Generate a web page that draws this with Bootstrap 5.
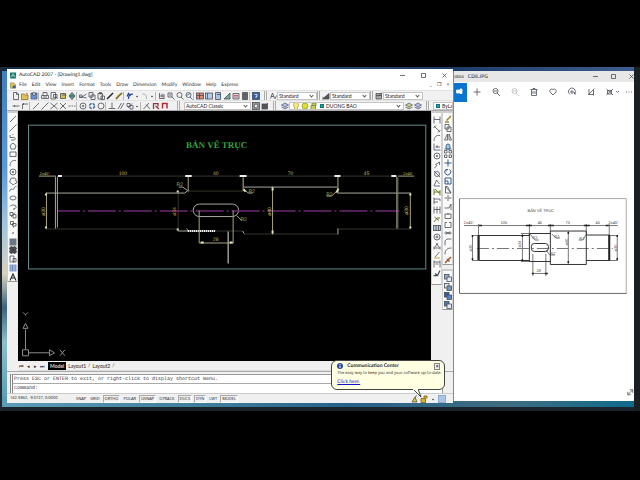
<!DOCTYPE html>
<html lang="en">
<head>
<meta charset="utf-8">
<meta name="viewport" content="width=device-width, initial-scale=1">
<title>AutoCAD 2007 - [Drawing1.dwg]</title>
<link href="https://cdn.jsdelivr.net/npm/bootstrap@5.3.0/dist/css/bootstrap.min.css" rel="stylesheet">
<style>
body{background:#000;font:5px/8px Lato,"Liberation Sans",sans-serif;text-rendering:geometricPrecision;color:#222;height:100vh;padding:67px 0 69px;overflow:hidden}
button,select{font:inherit;color:inherit;border:0;background:none;padding:0}
.desk{background:linear-gradient(90deg,#16293d,#2b5a84 30%,#1c3a66 70%,#3d5f8f) top/100% 4px no-repeat,linear-gradient(90deg,#5b9cb8,#41809c 30%,#26618a 55%,#3f6d80 80%,#0f6a8c) bottom 4px left 0/100% 6px no-repeat,linear-gradient(#3f7cc0,#5b9ad8 30%,#9cc4e0 45%,#d8d2c0 60%,#3b6480 70%,#8cc0c8 80%,#4d96b4);border-left:2px solid #222830;border-right:6px solid #1a2022}
.desk,.winrow,.acad,.photos,.photo{min-width:0;min-height:0}
.titlebar,.menus,.strip,.tabs,.cmd,.status,.phead,.ptools,.taskbar{flex-shrink:0}
.winrow{padding:2px 0 0 5px}
.taskbar{height:4px;background:#1b242c}
.acad{flex:447 1 0;background:#f0f0f0;margin-bottom:4px}
.photos{flex:180 1 0;background:#fff;margin:2px 0 6px;border-left:1px solid #888}
.titlebar{height:11px;background:#fff;padding:1px 0 0 3px;gap:3px}
.menus{height:10px;background:#fff;padding:0 4px 0 3px;color:#333}
.menus svg{margin-right:-2px}
.menus a{color:inherit;text-decoration:none}
.mgap{gap:5px}
.strip{height:10px;background:#f1f1f1;padding-left:4px;border-top:1px solid #e2e2e2}
.strip.tall{height:11px;border-bottom:1px solid #aaa}
.tb{width:9px;height:9px;flex:none;display:flex;align-items:center;justify-content:center}
.strip .tb.dot{width:6px}
.tb svg{width:8px;height:8px}
svg.ic{fill:none;stroke:#4a4f55;stroke-width:1.6;overflow:visible}
.sep{width:1px;height:8px;background:#b5b5b5;margin-right:1px;flex:none}
.brk{width:3px;height:9px;border-left:1px solid #aaa;border-right:1px solid #aaa;flex:none}
.strip .brk{margin:0 1px 0 0}
.strip.tall .brk{margin:0 4px}
.combo{position:relative;height:8px;background:#fff;border:1px solid #c4c4c4;display:flex;align-items:center;padding-left:1px;overflow:hidden;flex:none}
.combo select{appearance:none;flex:1;min-width:0;height:6px;line-height:6px;outline:0}
.combo::after{content:"";width:3px;height:3px;border:solid #555;border-width:0 1px 1px 0;transform:rotate(45deg);position:absolute;right:3px;top:1px}
.combo.bare{flex:1;padding-left:0}
.combo.bare::after{display:none}
.wide1{width:40px}.wide2{width:67px}.wide3{width:115px}
.swatch{width:4px;height:4px;background:#15a8a0;border:1px solid #177;margin:0 2px;flex:none}
.side{width:11px;flex:none}
.sidebox{background:#fafafa;border:1px solid #d0d0d0;border-top:2px solid #ccc;border-bottom-color:#999;display:flex;flex-direction:column;align-items:center;padding-top:2px}
.sidebox .tb{height:9px;flex:0 1 9px}
.drawbar{height:171px}.dimbar{height:174px}.modbar{height:154px}.ordbar{height:41px}
.model{background:#000;min-height:0}
.model svg,.photo svg{display:block;width:100%;height:100%}
.tabs{height:10px;border-bottom:1px solid #ddd;gap:2px}
.tabs .on{background:#000;color:#ddd;padding:0 2px;font-weight:700}
.navb{width:7px;height:8px}
.cmd{height:22px;border-top:1px solid #aaa;padding:2px 10px 0 3px}
.cmdbox{background:#fff;border:1px solid #999;border-left:3px double #888;font-family:"Liberation Mono",monospace;color:#333}
.cmdbox div,.cmdbox label{height:9px;line-height:9px;padding-left:1px}
.cmdbox div{border-bottom:1px solid #aaa}
.cmdbox input{border:0;outline:0;font:inherit;padding:0;height:7px}
.status{height:10px;border-top:1px solid #ccc;padding:0 7px 0 3px;gap:2px;font:4px/8px "Open Sans","Noto Sans",sans-serif}
.coord{width:63px}
.status button:not(.tb){padding:0 1px;height:8px}
.status button.on{border:1px solid #aaa;border-right-color:#fff;border-bottom-color:#fff;line-height:6px}
.tip{position:absolute;right:8px;bottom:13px;width:114px;height:30px;background:#ffffe1;border:1px solid #444;border-radius:6px;padding:1px 4px 0 5px}
.tip .tail{position:absolute;left:78px;top:28px;width:12px;height:9px;overflow:visible}
.tip .tiptext{font:4px/8px "Open Sans","Noto Sans",sans-serif}
.tip a{color:#11c}
.shut{width:6px;height:7px;border:1px solid #888;background:#eee;line-height:5px;font-weight:700}
.phead{height:11px;background:#e7e7e7}
.ptools{height:20px}
.ptools button{width:19px;height:19px;flex:none}
.ptools .home{background:#0a74d0;width:13px}
.ptools svg{width:8px;height:8px}
.wb{width:18px;height:8px;display:flex;justify-content:center;align-items:center}
.wb svg{width:5px;height:5px}
.phead .wb:last-child{width:12px;justify-content:flex-end}
.serif{font-family:"Liberation Serif",serif}
</style>
</head>
<body class="d-flex flex-column">
<main class="desk d-flex flex-column flex-fill">
<div class="winrow d-flex flex-fill">
<section class="acad d-flex flex-column position-relative" aria-label="AutoCAD">
  <header class="titlebar d-flex align-items-center">
    <svg class="ic" width="6" height="7" viewBox="0 0 16 16"><rect width="16" height="16" fill="#157a68" stroke="none"/><path d="M2 13L8 3l6 10M4 9h8" stroke="#d8f0e0"/></svg>
    <span class="flex-fill">AutoCAD 2007 - [Drawing1.dwg]</span>
    <button class="wb" aria-label="Minimize"><svg class="ic" viewBox="0 0 10 10"><path d="M0 5h10"/></svg></button>
    <button class="wb" aria-label="Maximize"><svg class="ic" viewBox="0 0 10 10"><path d="M1 1h8v8H1z"/></svg></button>
    <button class="wb" aria-label="Close"><svg class="ic" viewBox="0 0 10 10"><path d="M1 1l8 8M9 1L1 9"/></svg></button>
  </header>
  <nav class="menus mgap d-flex align-items-center">
    <svg class="ic" width="6" height="7" viewBox="0 0 16 16"><path d="M1 1h9l5 5v9H1z" fill="#e8c93a" stroke="#776"/><path d="M7 8h8v7H7z" fill="#3d5fa0" stroke="none"/></svg>
    <a href="#">File</a><a href="#">Edit</a><a href="#">View</a><a href="#">Insert</a><a href="#">Format</a><a href="#">Tools</a><a href="#">Draw</a><a href="#">Dimension</a><a href="#">Modify</a><a href="#">Window</a><a href="#">Help</a><a href="#" class="flex-fill">Express</a>
    <span>_</span><span>❐</span><span>×</span>
  </nav>
  <div class="strip d-flex align-items-center" role="toolbar" aria-label="Standard">
    <span class="d-flex align-items-center me-1" data-icons="new open save | print preview publish dwf | cut copy paste match brush | undo dot redo dot | pan zoom zoomwin zoomprev | props center palette sheet markup calc | help"></span>
    <i class="brk"></i><span class="d-flex" data-icons="tstyle"></span>
    <span class="combo wide1"><select aria-label="Text style"><option>Standard</option></select></span>
    <i class="brk"></i><span class="d-flex" data-icons="dstyle"></span>
    <span class="combo wide1"><select aria-label="Dimension style"><option>Standard</option></select></span>
    <i class="brk"></i><span class="d-flex" data-icons="table"></span>
    <span class="combo wide1"><select aria-label="Table style"><option>Standard</option></select></span>
  </div>
  <div class="strip tall d-flex align-items-center overflow-hidden" role="toolbar" aria-label="Object snap and layers">
    <span class="d-flex align-items-center me-1" data-icons="track from | line ray cross cross2 dash | circ quad tan | perp para insert dot | near magnet magnet2"></span>
    <i class="brk"></i>
    <span class="combo wide2"><select aria-label="Workspace"><option>AutoCAD Classic</option></select></span>
    <span class="d-flex" data-icons="gear screen"></span>
    <i class="brk"></i><span class="d-flex" data-icons="layers"></span>
    <span class="combo wide3"><span class="d-flex" data-icons="bulb sun lock"></span><i class="swatch"></i><select aria-label="Layer"><option>DUONG BAO</option></select></span>
    <span class="d-flex" data-icons="layers2 layers"></span>
    <i class="brk"></i>
    <span class="combo bare"><i class="swatch"></i><select aria-label="Colour"><option>ByLayer</option></select></span>
  </div>
  <div class="d-flex flex-fill overflow-hidden">
    <div class="side"><div class="sidebox drawbar" data-icons="line ray pline poly rect arc circ cloud spline ellipse earc insert block point hatch grad region tbl text"></div></div>
    <div class="d-flex flex-column flex-fill overflow-hidden">
      <div class="model flex-fill">
      <svg viewBox="18 112 414 249" fill="none" stroke-width="1" role="img" aria-label="Shaft drawing">
        <rect x="28.5" y="125.5" width="398" height="144" stroke="#638a8a"/>
        <text class="serif" x="217" y="148" text-anchor="middle" font-size="9" font-weight="bold" fill="#35a63b">BẢN VẼ TRỤC</text>
        <g stroke="#34342c">
          <path d="M62 176.500H397M46 229.500H178M188 191.500H244M178.500 191V231M244 234.500H338M338 229.500H411M216 231.500H243M244 177V190"/>
        </g>
        <g stroke="#a8a8a0">
          <path d="M46 193.500H185L188 191M178 231.500H188M55.500 177V229M244 187.500H338M338 193.500H411M243 231.500L244.500 234M338.500 229V235M188 231L187 229"/>
          <rect x="193.500" y="204.500" width="45.500" height="12.500" rx="6.250"/>
        </g>
        <path d="M188 231.500H216" stroke="#eee" stroke-width="2" stroke-dasharray="1.500 .5"/>
        <path d="M228.500 232V264" stroke="#e6e6e6"/>
        <path d="M58 211.500H400" stroke="#6a2870" stroke-width="1.500" stroke-dasharray="28 3 2 3" stroke-dashoffset="6"/>
        <g stroke="#a8a680">
          <path d="M57.500 177V228M39 176.500H56M46.500 193V229M188.500 177V192M243.500 178V191M338.500 177V193M273 187V235M199.500 211V243.500H233.500V211M397.500 177V229M398.500 176.500H415M411 193V229"/>
          <path d="M179 187.500H183L188 191M244 190L249 193.500H253M237 216L242 221M338 191L332 196.500H327"/>
        </g>
        <path d="M398.500 178V229" stroke="#777"/>
        <path d="M58 176.500H62M185.500 176.500H192M240 176.500H247M335 176.500H341M392 176.500H397" stroke="#eee" stroke-width="2"/>
        <path d="M46 194v2M46 227v2M411 194v2M411 227v2M273 188v3M273 231v3M178 191v2M178 229v2M201 243h3M230 243h3M244 190l2 2M337 193l2-4" stroke="#e4e2b8" stroke-width="2"/>
        <g font-size="5" font-family="Liberation Sans, sans-serif" fill="#c2b95e" text-anchor="middle">
          <text x="45" y="175" font-size="4">2x45°</text><text x="123" y="175">100</text><text x="216" y="175">40</text><text x="291" y="175">70</text><text x="367" y="175">45</text><text x="409" y="175" font-size="4">2x45°</text>
          <text x="180" y="186">R2</text><text x="252" y="193">R2</text><text x="244" y="221">R2</text><text x="330" y="196">R2</text><text x="216" y="242">28</text>
          <text transform="translate(45 212) rotate(-90)">ø30</text><text transform="translate(176 212) rotate(-90)" fill="#c28a30">ø34</text><text transform="translate(271 212) rotate(-90)">ø40</text><text transform="translate(409 211) rotate(-90)">ø30</text>
        </g>
        <path d="M22.500 350.500h6v6h-6zM25.500 350V330M28 353.500H49M49.500 350.500v6l5-3zM23 329l2.500-5 2.500 5zM23 313l2.500 2.500 2.500-2.500M25.500 315v1M60 350.500l5 6M65 350.500l-5 6" stroke="#8d8d8d"/>
      </svg>
      </div>
      <div class="tabs d-flex align-items-center">
        <span class="d-flex text-center"><button class="navb" aria-label="First">⏮&#xFE0E;</button><button class="navb" aria-label="Previous">◂</button><button class="navb" aria-label="Next">▸</button><button class="navb" aria-label="Last">⏭&#xFE0E;</button></span>
        <button class="on">Model</button><button>Layout1</button><span>/</span><button>Layout2</button><span>/</span>
      </div>
    </div>
    <div class="side"><div class="sidebox dimbar" data-icons="dlin dali arc dord circ jog dia ang quick base cont lead tol cmark dedit dtedit dup dupd"></div></div>
    <div class="side"><div class="sidebox modbar" data-icons="erase copy mirror offset array move rotate scale stretch trim extend brkp brk2 join chamf fillet explode"></div>
      <div class="sidebox ordbar mt-1" data-icons="front back above under"></div></div>
  </div>
  <div class="cmd"><div class="cmdbox text-nowrap"><div>Press ESC or ENTER to exit, or right-click to display shortcut menu.</div><label class="d-flex align-items-center">Command:<input class="flex-fill" aria-label="Command line"></label></div></div>
  <footer class="status d-flex align-items-center text-nowrap">
    <span class="coord">162.9362, -9.0727, 0.0000</span>
    <button>SNAP</button><button>GRID</button><button class="on">ORTHO</button><button>POLAR</button><button class="on">OSNAP</button><button>OTRACK</button><button class="on">DUCS</button><button class="on">DYN</button><button>LWT</button><button class="on">MODEL</button>
    <span class="d-flex ms-auto" data-icons="comm unlock dot clean"></span>
  </footer>
  <aside class="tip" role="status">
    <svg class="tail" viewBox="0 0 12 9"><path d="M3 0L11 8L8 0" fill="#ffffe1" stroke="#444"/><path d="M3 0h5" stroke="#ffffe1" stroke-width="2"/></svg>
    <div class="d-flex align-items-center"><svg class="me-1" width="6" height="6" viewBox="0 0 12 12"><circle cx="6" cy="6" r="6" fill="#274a9c"/><path d="M6 5v5M6 2v2" stroke="#fff" stroke-width="2"/></svg><b class="flex-fill">Communication Center</b><button class="shut" aria-label="Close">×</button></div>
    <div class="text-nowrap tiptext">The easy way to keep you and your software up-to-date.</div>
    <a href="#">Click here.</a>
  </aside>
</section>
<section class="photos d-flex flex-column overflow-hidden" aria-label="Photos">
  <header class="phead d-flex align-items-center"><span class="me-1">otos</span><span class="flex-fill">CD8.JPG</span>
    <button class="wb" aria-label="Minimize"><svg class="ic" viewBox="0 0 10 10"><path d="M0 5h10"/></svg></button><button class="wb" aria-label="Maximize"><svg class="ic" viewBox="0 0 10 10"><path d="M1 1h8v8H1z"/></svg></button><button class="wb" aria-label="Close"><svg class="ic" viewBox="0 0 10 10"><path d="M1 1l8 8M9 1L1 9"/></svg></button></header>
  <div class="ptools d-flex align-items-center overflow-hidden" role="toolbar" aria-label="Photo tools" data-photo="home plus zin zout bin heart turn crop edit more"></div>
  <div class="photo flex-fill overflow-hidden">
  <svg viewBox="454 102 180 299" fill="none" stroke="#333" role="img" aria-label="Shaft picture">
    <path d="M459.500 198.500H626.500V293" stroke="#aaa"/><path d="M459.500 198.500V293.500H627" stroke="#666"/>
    <g font-size="4" font-family="Liberation Sans, sans-serif" fill="#444" stroke="none" text-anchor="middle">
      <text x="541" y="212" font-size="4">BẢN VẼ TRỤC</text>
      <text x="469" y="224">2x45°</text><text x="504" y="224">105</text><text x="540" y="224">45</text><text x="568" y="224">70</text><text x="598" y="224">45</text><text x="614" y="224">2x45°</text>
      <text x="535" y="239">R2</text><text x="557" y="238">R2</text><text x="582" y="240">R2</text><text x="553" y="255">R2</text><text x="539" y="272">28</text>
      <text transform="translate(472 248) rotate(-90)">ø30</text><text transform="translate(521 244) rotate(-90)">ø34</text><text transform="translate(568 242) rotate(-90)">ø40</text><text transform="translate(617 248) rotate(-90)">ø30</text>
    </g>
    <path d="M464 225.500H618M472.500 235V260M522.500 233V262M568.500 231V264M617.500 235V260M478.500 224V235M529.500 224V235M550.500 224V231M586.500 224V235M609.500 224V235M533 254V276M546 254V276M532 273.500H547M472 235.500H478M472 260.500H478M609 235.500H618M609 260.500H618M521 233.500H530M521 261.500H530M530 234l5 6h4M552 234l4 4h4M586 235l-3 5h-4M546 250l4 5h5" stroke="#777"/>
    <path d="M477 248.500H613" stroke="#777" stroke-dasharray="12 3 2 3"/>
    <path d="M479 235.500H529.500V233.500H550.500V231H586.500V235H609.500V260.500H586.500V264.500H550.500V261.500H529.500V260.500H479ZM529.500 234V261M550.500 233V262M586.500 235V261" stroke="#333"/>
    <path d="M478.500 235V260.500M609.500 235V260.500" stroke="#222" stroke-width="2"/>
    <rect x="531.500" y="243.500" width="17" height="8" rx="3"/>
    <path d="M479 225.500h3M526 225.500h6M548 225.500h6M584 225.500h6M606 225.500h3M532 273.500h2M545 273.500h3M472.500 235v2M472.500 258v2M522.500 235v2M522.500 259v2M568.500 232v2M568.500 261v2M617.500 235v2M617.500 258v2" stroke="#222" stroke-width="1.500"/>
    <path d="M628 395l5-5M630 390h3v3M628 392v3h3" stroke="#555" stroke-width=".8"/>
  </svg>
  </div>
</section>
</div>
<div class="taskbar"></div>
</main>
<script src="https://cdn.jsdelivr.net/npm/bootstrap@5.3.0/dist/js/bootstrap.bundle.min.js"></script>
<script>
// Glyphs on a 16-unit grid, keyed by command name.
const sheetStack = (a, b) => `<rect x="1" y="1" width="9" height="9" fill="${a}"/><rect x="6" y="6" width="9" height="9" fill="${b}"/>`;
const p = d => `<path d="${d}"/>`;
const glyphs = {
  new: p('M3 1h7l3 3v11H3zM9 1v4h4'), open: '<path d="M1 4h5l2 2h6v9H1z" fill="#e3c25a" stroke="#8a7430"/><path d="M10 2l4 3" stroke="#c33"/>',
  save: '<path d="M2 2h12v12H2z" fill="#6d93c9" stroke="#3c5f96"/><path d="M5 2h6v4H5z" fill="#fff"/>',
  print: p('M4 7V1h8v6M1 7h14v6H1zM4 10h8'), preview: p('M2 1h9v13H2zM12 9l3 5M7 5h7v6H7z'), publish: '<path d="M3 3h10v10H3z" fill="#d9c64a"/>' + p('M6 6h9'), dwf: '<path d="M8 1l6 7-6 7-6-7z" fill="#57a38c"/><path d="M3 8h10"/>',
  cut: p('M1 10h5l9-6M6 10l9 2M1 6h5v5H1z'), copy: p('M2 1h8v9H2zM6 6h8v9H6z'), paste: p('M2 3h9v11H2zM5 1h4v3H5zM8 8h7v7H8z'), match: '<path d="M2 14l5-5 7-7" stroke="#222" stroke-width="3"/>', brush: '<path d="M2 14l5-6 7-6" stroke="#b4912c" stroke-width="4"/>' + p('M2 14l12-12'),
  undo: '<path d="M5 14C5 5 8 4 14 4M2 9l3-6 4 5" stroke="#274a9c" stroke-width="2.500"/>', redo: '<path d="M11 14C11 5 8 4 3 4" stroke="#999"/>', dot: '<circle cx="8" cy="9" r="1" fill="#444"/>',
  pan: p('M3 2v11h10M8 3v8M12 4v9M3 8h9'), zoom: p('M2 2h8v8H2zM10 10l5 5M6 4v4'), zoomwin: '<circle cx="7" cy="6" r="5"/>' + p('M10 10l5 5'), zoomprev: '<circle cx="7" cy="6" r="5"/><path d="M3 7l7-4M10 10l5 5" stroke="#274a9c"/>',
  props: '<rect x="1" y="2" width="14" height="12" fill="#d98a7a"/>' + p('M1 7h14M7 2v12'), center: '<rect x="1" y="2" width="14" height="12" fill="#b8cce6"/>' + p('M5 2v12'), palette: '<path d="M3 1h10v14H3z" fill="#a8c4e2"/>' + p('M6 5h8'),
  sheet: '<path d="M2 14L14 2v12z" fill="#7aa7a2"/>', markup: '<path d="M2 3h12v11H2z" fill="#d8dce4"/><path d="M4 7h8M4 10h8" stroke="#c44"/>', calc: '<path d="M3 1h10v14H3z" fill="#666"/>' + p('M5 5h6'), help: '<rect x="1" y="1" width="14" height="14" fill="#2f5fa8"/><path d="M5 5h5v4H8v3" stroke="#fff"/>',
  tstyle: p('M3 13L7 2l4 11M4 9h6M12 14l3-7'), dstyle: '<path d="M1 14h13V3zM1 10l4 3" fill="#555"/>', table: '<path d="M2 3h11v11H2z" fill="#aaa"/>' + p('M6 9l8-8M2 7h11'),
  track: p('M1 8h14M5 6v4'), from: p('M3 14V4h11M5 2v4'), line: p('M2 14L14 2'), ray: p('M1 15L15 1'), cross: p('M1 2l14 12M15 2L1 14'), cross2: p('M2 2l12 12M14 2L2 14M6 8h4'), dash: p('M1 8h4M7 8h3M12 8h3'),
  circ: '<circle cx="8" cy="8" r="6"/><circle cx="8" cy="8" r="1.500"/>', quad: '<circle cx="8" cy="8" r="5" stroke="#436b94" stroke-width="3" stroke-dasharray="6 2"/>', tan: '<circle cx="8" cy="8" r="6"/>',
  perp: p('M8 1v12M1 13h14'), para: p('M2 14L9 2M7 14l7-12'), insert: p('M2 3h6v6H2zM8 7h6v7H8zM4 12l8-9'), near: p('M1 14L12 2M6 5l8 9'), magnet: '<path d="M3 14V3h9v6M7 8l7 6" stroke="#8f3542" stroke-width="2.500"/>', magnet2: '<path d="M3 13V3h9v10" stroke="#b02a34" stroke-width="3"/>',
  gear: '<rect x="1" y="1" width="14" height="14" fill="#999"/><circle cx="8" cy="8" r="4" fill="#dce8e4"/>', screen: '<rect x="2" y="4" width="11" height="10" fill="#555"/>' + p('M7 8l7-6'),
  layers: '<path d="M1 6l7-4 7 4-7 4zM1 10l7 4 7-4" fill="#b7c2d8" stroke="#59647e"/>', layers2: '<path d="M1 6l7-4 7 4-7 4zM1 10l7 4 7-4" fill="#d0cf80" stroke="#59647e"/>',
  bulb: '<path d="M5 11C0 4 5 1 8 1s8 3 3 10v4H5z" fill="#f3e97a" stroke="#a89d3c"/>', sun: '<circle cx="8" cy="8" r="6" fill="#e2dd34" stroke="#93a32a"/>', lock: '<path d="M2 7h9v8H2zM4 7V2h8v6" fill="#c6cf63" stroke="#777e35"/>', unlock: '<path d="M2 7h9v8H2zM8 7V2h6v5" fill="#e0b32a" stroke="#7a6118"/>',
  pline: p('M2 4v5h9a3 3 0 010 5H4M8 2v2'), poly: p('M8 2l6 5-2 7H4L2 7z'), rect: p('M2 4h12v9H2z'), arc: p('M2 14C2 6 6 2 14 3'), cloud: p('M3 6a3 3 0 015-3 3 3 0 015 4 3 3 0 01-1 6 4 4 0 01-7 0 4 4 0 01-2-7z'), spline: p('M1 13C4 3 8 13 10 7s4-3 5-4'), ellipse: '<ellipse cx="8" cy="8" rx="6" ry="4"/>', earc: p('M2 7a6 4 0 1112 2l-4 4M8 12h4'), block: p('M3 3h6v6H3zM7 7h7v5H7zM9 12v3'), point: '<circle cx="8" cy="8" r="1"/>',
  hatch: '<rect x="2" y="2" width="12" height="12" fill="#9fc0d8"/>' + p('M2 6h12M2 10h12M6 2v12M10 2v12'), grad: '<rect x="2" y="2" width="12" height="12" fill="#444"/><path d="M0 5h16M0 11h16M5 0v16M11 0v16"/>', region: p('M2 2h8v12H2zM8 7h6v7H8z'), tbl: '<rect x="2" y="2" width="12" height="12" fill="#b4c8ea" stroke="#6a86bd"/><path d="M2 6h12M2 10h12M7 2v12" stroke="#6a86bd"/>', text: '<path d="M2 15L8 2l6 13M4 10h8" stroke="#222" stroke-width="2.200"/>',
  dlin: p('M2 1v14M14 1v14M2 7h12'), dali: p('M2 2l12 12M1 6l5-5M10 15l5-5'), dord: p('M2 1v13h13M8 4v6M5 8h9'), jog: p('M3 14l5-5-3-2 8-5v6'), dia: '<circle cx="8" cy="8" r="5"/>' + p('M2 2l12 12'), ang: p('M7 2L2 14h12M7 2l6 8'), quick: '<path d="M2 2v12M14 4v11M2 8h12M4 2l9 9" stroke="#6b7b27" stroke-width="2"/>', base: p('M2 1v14M2 4h12v4M2 10h8'), cont: p('M2 1v14M8 1v14M14 1v14M2 7h12'), lead: '<path d="M2 14l6-8h6M3 4l9 7" stroke="#65752a" stroke-width="2"/>', tol: '<rect x="1" y="3" width="14" height="10" fill="#b9d2dc"/>' + p('M6 3v10M11 3v10'), cmark: '<circle cx="8" cy="8" r="6"/>' + p('M8 5v6M5 8h6'), dedit: p('M2 9v6M14 9v6M2 12h12M5 10l3-8 3 8'), dtedit: '<path d="M2 14h12" stroke="#a99a20"/>' + p('M4 12l9-10'), dup: p('M2 1v14M14 1v14M2 4h12M5 8h6'), dupd: '<path d="M1 13h8l5-10M4 9l6 5" stroke-width="2.500"/>',
  erase: '<path d="M2 14h8M5 11l9-9" stroke="#9a8a34" stroke-width="3"/>', mirror: p('M7 2v12H1zM10 2v12h5z'), offset: '<path d="M4 14V8a4 4 0 018 0v6zM1 14h14" fill="#a7c2da" stroke="#335c82"/>', array: p('M1 1h5v5H1zM10 1h5v5h-5zM1 10h5v5H1zM10 10h5v5h-5z'), move: '<path d="M8 1v14M1 8h14" stroke="#315a8c" stroke-width="2"/>', rotate: '<path d="M4 3a6 6 0 107 0M4 3h4M4 3v4" stroke="#315a8c" stroke-width="2"/>', scale: '<path d="M2 2h12v12H2zM2 8h6v6" stroke="#315a8c" stroke-width="2"/>', stretch: p('M3 1v13h11zM3 1h4l7 13'), trim: p('M1 8h5M9 8h6M8 2v12'), extend: p('M1 10h9l4-8M14 2v12'), brkp: p('M2 4h12v9H2zM8 2v4'), brk2: p('M6 3H2v10h12V3h-4'), join: '<path d="M1 8h14M4 5l3 3-3 3M12 5L9 8l3 3" stroke-width="2"/>', chamf: p('M2 15V6l4-4h9'), fillet: p('M2 15C2 6 6 2 15 2'), explode: '<path d="M2 14l6-6 6-6M6 6l5 5" stroke="#a84f31" stroke-width="3"/>',
  front: sheetStack('#8fb0cf', '#e3ebf3'), back: sheetStack('#dfe6ee', '#7798bb'), above: sheetStack('#2f5fa8', '#5b83bb'), under: sheetStack('#4b78b5', '#e5ecf5'),
  comm: '<path d="M2 14h10L8 4z" fill="#d8c83a"/>' + p('M8 4l4-3'), clean: '<rect x="1" y="1" width="14" height="14" fill="#a9c6e8" stroke="#7ca0cc"/>',
  home: '<path d="M-1 4h7v6H-1zM6 2h4v9H6" fill="#fff" stroke="#fff"/>', plus: p('M8 1v14M1 8h14'), zin: '<circle cx="7" cy="6" r="5"/>' + p('M4 6h6M10 10l6 6'), zout: '<g opacity=".4"><circle cx="7" cy="6" r="5"/>' + p('M4 6h6M10 10l6 6') + '</g>', bin: p('M1 3h14M3 3v12h10V3M6 3V1h4v2M6 6v6M10 6v6'), heart: p('M8 14L2 8a4 4 0 016-5 4 4 0 016 5z'), turn: p('M4 13A7 7 0 1113 12M13 12h3M13 12V8M6 6h4v4H6z'), crop: p('M4 2v11h10M13 4v11M2 14L15 1'), edit: p('M1 2l13 12M14 2L1 14M3 5h8v7H3zM20 6l3 3 3-3'), more: p('M2 8h2M7 8h2M12 8h2')
};
const draw = (name, cls) => name === '|' ? '<i class="sep"></i>' :
  `<button class="${cls} ${name === 'home' || name === 'dot' ? name : ''}" aria-label="${name}"><svg class="ic" viewBox="0 0 16 16">${glyphs[name]}</svg></button>`;
document.querySelectorAll('[data-icons]').forEach(bar => bar.innerHTML = bar.dataset.icons.split(' ').map(n => draw(n, 'tb')).join(''));
document.querySelectorAll('[data-photo]').forEach(bar => bar.innerHTML = bar.dataset.photo.split(' ').map(n => draw(n, '')).join(''));
</script>
</body>
</html>
